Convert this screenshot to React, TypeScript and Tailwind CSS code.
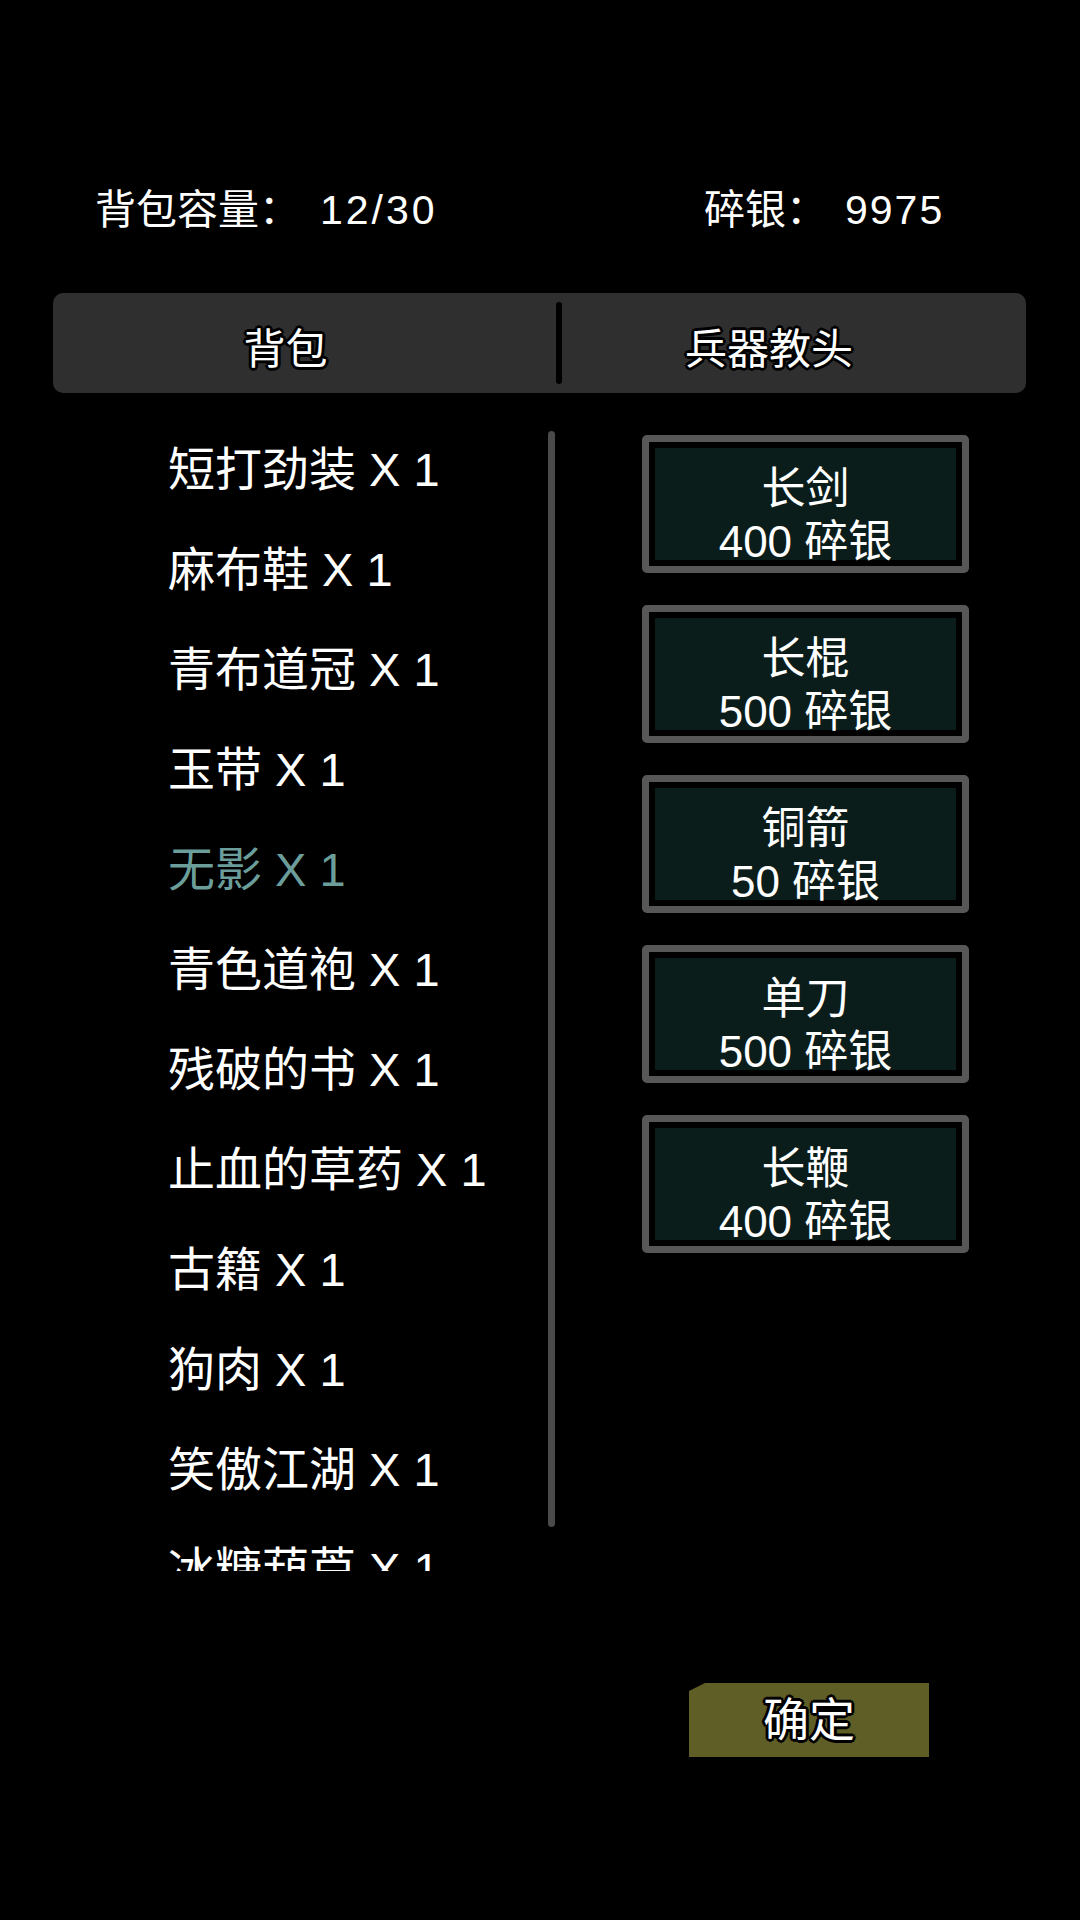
import React from 'react';

const items = [
  { name: '短打劲装', count: 1 },
  { name: '麻布鞋', count: 1 },
  { name: '青布道冠', count: 1 },
  { name: '玉带', count: 1 },
  { name: '无影', count: 1, special: true },
  { name: '青色道袍', count: 1 },
  { name: '残破的书', count: 1 },
  { name: '止血的草药', count: 1 },
  { name: '古籍', count: 1 },
  { name: '狗肉', count: 1 },
  { name: '笑傲江湖', count: 1 },
  { name: '冰糖葫芦', count: 1 },
];

const weapons = [
  { name: '长剑', price: 400 },
  { name: '长棍', price: 500 },
  { name: '铜箭', price: 50 },
  { name: '单刀', price: 500 },
  { name: '长鞭', price: 400 },
];

const outline =
  '[text-shadow:-2px_-2px_0_#000,2px_-2px_0_#000,-2px_2px_0_#000,2px_2px_0_#000,0_3px_0_#000,0_-3px_0_#000,3px_0_0_#000,-3px_0_0_#000]';

export default function App() {
  return (
    <div className="w-[1080px] h-[1920px] bg-black text-white font-['Liberation_Sans','Noto_Sans_CJK_SC',sans-serif] overflow-hidden">
      {/* header */}
      <div className="mt-[180px] h-[60px] flex items-center text-[41px] leading-none">
        <div className="ml-[95px] w-[609px] flex items-center">
          <span>背包容量：</span>
          <span className="ml-[20px] tracking-[3px]">12/30</span>
        </div>
        <div className="flex items-center">
          <span>碎银：</span>
          <span className="ml-[18px] tracking-[2px]">9975</span>
        </div>
      </div>

      {/* tabs */}
      <div className="mt-[53px] ml-[53px] w-[973px] h-[100px] rounded-[10px] bg-[#2f2f2f] flex">
        <div className={`w-[503px] flex items-center justify-center pr-[38px] pt-[12px] text-[42px] ${outline}`}>
          背包
        </div>
        <div className="w-[6px] h-[82px] self-center bg-black rounded-full" />
        <div className={`flex-1 flex items-center justify-center pr-[50px] pt-[12px] text-[42px] ${outline}`}>
          兵器教头
        </div>
      </div>

      {/* content */}
      <div className="mt-[27px] flex">
        <div className="relative w-[560px] h-[1151px] overflow-hidden">
          {items.map((item) => (
            <div
              key={item.name}
              className={`h-[100px] flex items-center pl-[168px] text-[47px] whitespace-pre ${item.special ? 'text-[#6b9e9a]' : 'text-white'}`}
            >
              {`${item.name} X ${item.count}`}
            </div>
          ))}
          <div className="absolute left-[548px] top-[11px] w-[7px] h-[1096px] rounded-full bg-[#4a4a4a]" />
        </div>

        <div className="ml-[82px] pt-[15px] flex flex-col gap-[32px]">
          {weapons.map((w) => (
            <div key={w.name} className="w-[327px] h-[138px] rounded-[5px] border-[7px] border-[#575757]">
              <div className="h-full border-[6px] border-black bg-[#0b1d1b] flex flex-col items-center pt-[14px] text-[44px]">
                <span className="leading-[53px]">{w.name}</span>
                <span className="leading-[53px]">{w.price} 碎银</span>
              </div>
            </div>
          ))}
        </div>
      </div>

      {/* confirm */}
      <div className="mt-[112px] ml-[689px] w-[240px] h-[74px] bg-[#5f5e27] [clip-path:polygon(16px_0,100%_0,100%_100%,0_100%,0_8px)] flex items-center justify-center">
        <span className={`text-[46px] leading-none ${outline}`}>确定</span>
      </div>
    </div>
  );
}
